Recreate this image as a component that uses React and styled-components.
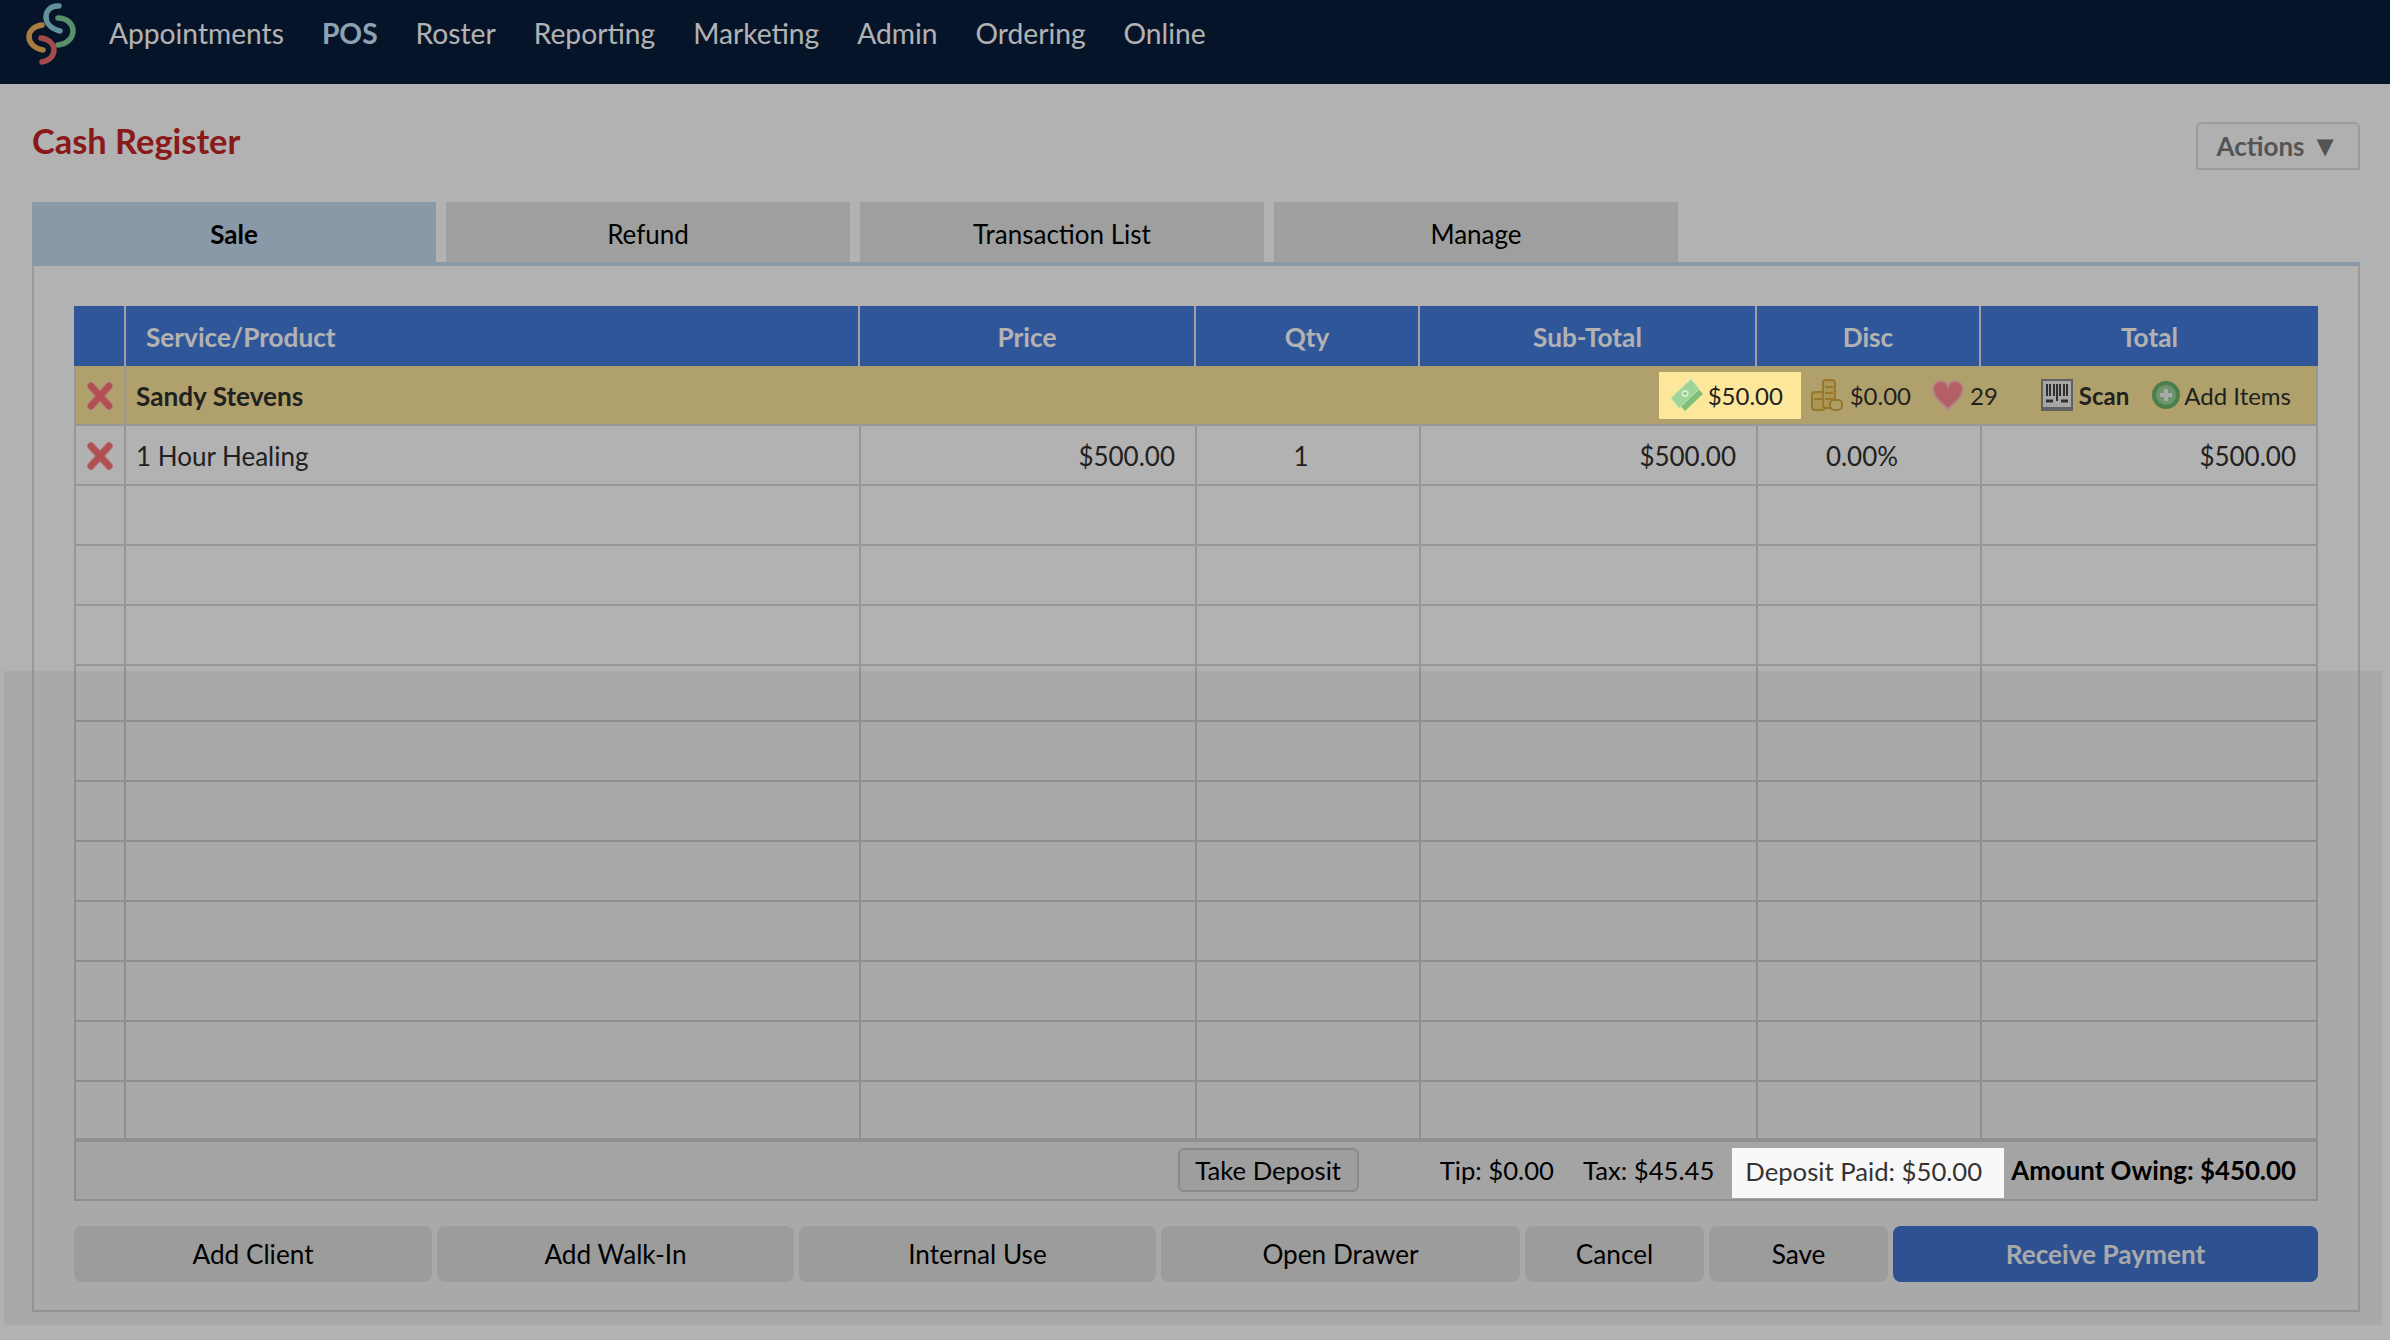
import React from 'react';
import styled, { createGlobalStyle } from 'styled-components';

const GlobalStyle = createGlobalStyle`
    html, body {
        margin: 0;
        background: #fff;
    }
    body {
        font-family: Lato, 'Liberation Sans', sans-serif;
        font-size: 26px;
        color: #303030;
    }
    * {
        box-sizing: border-box;
    }
`;

const Page = styled.div`
    width: 2390px;
    height: 1340px;
    overflow: hidden;
`;

// modal backdrop, everything except the highlighted boxes sits under it
const Dimmer = styled.div`
    position: fixed;
    inset: 0;
    background: rgba(0, 0, 0, 0.3);
    z-index: 10;
`;
const DimBand = styled.div`
    position: fixed;
    left: 4px;
    top: 671px;
    width: 2378px;
    height: 654px;
    background: rgba(0, 0, 0, 0.05);
    z-index: 11;
`;

const NavBar = styled.nav`
    height: 84px;
    background: #091d3c;
    display: flex;
    align-items: flex-start;
    padding: 2px 0 0 26px;
`;
const NavLinks = styled.ul`
    display: flex;
    gap: 38px;
    list-style: none;
    margin: 0;
    padding: 14px 0 0 15px;
`;
const NavLink = styled.li`
    color: ${(p) => (p.$active ? '#cce9ff' : '#fff')};
    font-size: 28.2px;
    font-weight: ${(p) => (p.$active ? 700 : 400)};
    line-height: 34px;
`;

const Content = styled.main`
    padding: 0 30px 0 32px;
`;
const TitleBar = styled.header`
    height: 118px;
    display: flex;
    justify-content: space-between;
    align-items: flex-start;
`;
const Title = styled.h1`
    margin: 36px 0 0;
    font-size: 34.4px;
    line-height: 42px;
    font-weight: 700;
    color: #c62525;
`;
const ActionsButton = styled.button`
    margin-top: 38px;
    width: 164px;
    height: 48px;
    font: 700 26px Lato, sans-serif;
    color: #797979;
    background: #fdfdfd;
    border: 2px solid #e0e0e0;
    border-radius: 6px 6px 0 0;
    padding: 0;
`;
const Caret = styled.span`
    font-size: 29px;
    line-height: 20px;
`;

const Tabs = styled.div`
    display: flex;
    gap: 10px;
`;
const Tab = styled.div`
    width: 404px;
    height: ${(p) => (p.$active ? 64 : 60)}px;
    margin-bottom: ${(p) => (p.$active ? -4 : 0)}px;
    position: relative;
    background: ${(p) => (p.$active ? '#c5dcf0' : '#e4e4e4')};
    color: #000;
    font-size: 26px;
    font-weight: ${(p) => (p.$active ? 700 : 400)};
    display: flex;
    justify-content: center;
    padding-top: 16px;
    line-height: 32px;
`;
const Panel = styled.section`
    height: 1050px;
    border: 2px solid #dcdcdc;
    border-top: 4px solid #c5dcf0;
    padding: 40px 40px 0;
`;

const COLUMNS = '50px 735px 336px 224px 337px 224px 334px';

const Table = styled.div`
    width: 2244px;
`;
const HeadRow = styled.div`
    display: grid;
    grid-template-columns: 52px 734px 336px 224px 337px 224px 337px;
    height: 60px;
    background: #467bdd;
`;
const HeadCell = styled.div`
    color: #fff;
    font-weight: 700;
    font-size: 26.2px;
    line-height: 62px;
    text-align: ${(p) => p.$align || 'center'};
    padding-left: ${(p) => (p.$align === 'left' ? 20 : 0)}px;
    border-right: ${(p) => (p.$last ? 0 : '2px solid #e6e6e6')};
`;
const TableBody = styled.div`
    border-left: 2px solid #d8d8d8;
    border-right: 2px solid #d8d8d8;
`;
const Row = styled.div`
    display: grid;
    grid-template-columns: ${COLUMNS};
    height: ${(p) => p.$height || 60}px;
    border-bottom: ${(p) => (p.$heavy ? 4 : 2)}px solid #d8d8d8;
`;
const Cell = styled.div`
    display: flex;
    align-items: center;
    justify-content: ${(p) => p.$justify || 'flex-start'};
    padding: 2px ${(p) => p.$right || 0}px 0 ${(p) => p.$left || 0}px;
    border-right: ${(p) => (p.$last ? 0 : '2px solid #d8d8d8')};
`;
const ClientRow = styled.div`
    display: grid;
    grid-template-columns: 50px 1fr;
    height: 60px;
    background: #fde79b;
    border-bottom: 2px solid #d8d8d8;
`;
const ClientCell = styled.div`
    display: flex;
    align-items: center;
    justify-content: space-between;
    padding: 0 25px 0 10px;
`;
const ClientName = styled.strong`
    font-size: 26.2px;
    padding-top: 2px;
`;
const ClientInfo = styled.div`
    display: flex;
    align-items: center;
    font-size: 24px;
`;
const InfoItem = styled.span`
    display: inline-flex;
    align-items: center;
    gap: ${(p) => p.$gap || 7}px;
    margin-left: ${(p) => p.$left || 0}px;
    font-weight: ${(p) => (p.$bold ? 700 : 400)};
`;
// these two sit above the backdrop
const Highlight = styled.span`
    position: relative;
    z-index: 20;
    display: inline-flex;
    align-items: center;
    gap: 5px;
    width: 142px;
    height: 47px;
    padding-left: 12px;
    background: #fde79b;
    color: #222;
`;

const Footer = styled.div`
    height: 59px;
    display: flex;
    justify-content: flex-end;
    align-items: stretch;
    padding: 0 20px 0 0;
    border: 2px solid #d8d8d8;
    border-top: 0;
    background: #f8f8f8;
    color: #000;
    font-size: 25.7px;
`;
const DepositButton = styled.button`
    align-self: flex-start;
    margin: 6px 81px 0 0;
    width: 181px;
    height: 44px;
    font: 400 25.7px Lato, sans-serif;
    color: #000;
    background: #eee;
    border: 2px solid #cfcfcf;
    border-radius: 6px;
    padding: 0;
`;
const FooterText = styled.span`
    line-height: 57px;
    margin-right: ${(p) => p.$right || 0}px;
    font-weight: ${(p) => (p.$bold ? 700 : 400)};
    font-size: ${(p) => (p.$bold ? '25.85px' : 'inherit')};
`;
const DepositPaid = styled.span`
    position: relative;
    z-index: 20;
    align-self: flex-start;
    margin: 6px 7px 0 0;
    width: 272px;
    height: 50px;
    padding-left: 13px;
    line-height: 47px;
    background: #f8f8f8;
    color: #333;
`;

const ButtonBar = styled.div`
    display: flex;
    gap: 5px;
    margin-top: 25px;
`;
const BarButton = styled.button`
    width: ${(p) => p.$width}px;
    height: 56px;
    border: 0;
    border-radius: 8px;
    padding: 0;
    font: ${(p) => (p.$primary ? 700 : 400)} 26.2px Lato, sans-serif;
    color: ${(p) => (p.$primary ? '#fff' : '#000')};
    background: ${(p) => (p.$primary ? '#467bdd' : '#ececec')};
`;

const Logo = () => (
    <svg width='68' height='68' viewBox='0 0 68 68' fill='none' strokeWidth='5.5' strokeLinecap='round'>
        <path d='M33 4C25 3 20 9 20 15C20 22 26 27 34 29' stroke='#8fd0dd' />
        <path d='M32 16C41 16 47 22 47 29C47 36 41 42 32 43' stroke='#7fcf98' />
        <path d='M16 23C8 24 3 29 3 35C3 41 9 47 17 48' stroke='#f2b45d' />
        <path d='M15 36C23 37 28 42 28 48C28 54 23 59 16 60' stroke='#ec6a6a' />
    </svg>
);

const RemoveIcon = () => (
    <svg width='28' height='30' viewBox='0 0 28 30' fill='none' strokeLinecap='round'>
        <path d='M5 5L23 25M23 5L5 25' stroke='#ffb0b0' strokeWidth='8' />
        <path d='M5 5L23 25M23 5L5 25' stroke='#ff7278' strokeWidth='6' />
    </svg>
);

const MoneyIcon = () => (
    <svg width='32' height='32' viewBox='0 0 32 32'>
        <path d='M6 23L24 6L32 15L14 32Z' fill='#7fbf7a' />
        <path d='M0 19L20 0L28 10L8 29Z' fill='#9ed49a' stroke='#bfe6b8' strokeWidth='1' />
        <circle cx='14' cy='14.5' r='3.5' fill='#d4efcd' />
        <circle cx='14' cy='14.5' r='1.5' fill='#7fbf7a' />
    </svg>
);

const CoinsIcon = () => (
    <svg width='32' height='32' viewBox='0 0 32 32'>
        <rect x='1' y='13' width='13' height='18' rx='3' fill='#f7d77c' stroke='#d9ab3e' strokeWidth='2' />
        <rect x='12' y='1' width='12' height='28' rx='3' fill='#f7d77c' stroke='#d9ab3e' strokeWidth='2' />
        <path d='M14 8H22M14 14H22M14 20H22M3 20H12' stroke='#d9ab3e' strokeWidth='2' />
        <rect x='19' y='21' width='12' height='10' rx='4' fill='#fbe194' stroke='#d9ab3e' strokeWidth='2' />
    </svg>
);

const HeartIcon = () => (
    <svg width='32' height='30' viewBox='0 0 32 30'>
        <path d='M16 29C9 23 1 17 1 9C1 4 5 1 9 1C12 1 15 3 16 6C17 3 20 1 23 1C27 1 31 4 31 9C31 17 23 23 16 29Z' fill='#ff8a8e' stroke='#ffc4c4' strokeWidth='2' />
    </svg>
);

const BarcodeIcon = () => (
    <svg width='32' height='32' viewBox='0 0 32 32'>
        <rect width='32' height='32' fill='#8c8c8c' />
        <rect x='2' y='2' width='28' height='26' fill='#eee' />
        <path d='M6 5V17M9 5V17M13 5V17M16 5V22M19 5V17M23 5V17M26 5V17' stroke='#444' strokeWidth='2' />
        <path d='M5 22H12M20 22H27' stroke='#444' strokeWidth='3' />
    </svg>
);

const AddIcon = () => (
    <svg width='28' height='28' viewBox='0 0 28 28'>
        <circle cx='14' cy='14' r='14' fill='#6cb56c' />
        <circle cx='14' cy='14' r='10' fill='#9bd69b' />
        <path d='M14 8V20M8 14H20' stroke='#f2f2f2' strokeWidth='4' />
    </svg>
);

const NAV_ITEMS = ['Appointments', 'POS', 'Roster', 'Reporting', 'Marketing', 'Admin', 'Ordering', 'Online'];
const TABS = ['Sale', 'Refund', 'Transaction List', 'Manage'];
const EMPTY_ROWS = [60, 60, 60, 56, 60, 60, 60, 60, 60, 60, 60];
const BUTTONS = [
    ['Add Client', 358],
    ['Add Walk-In', 357],
    ['Internal Use', 357],
    ['Open Drawer', 359],
    ['Cancel', 179],
    ['Save', 179],
];

const App = () => {
    return (
        <Page>
            <GlobalStyle />
            <NavBar>
                <Logo />
                <NavLinks>
                    {NAV_ITEMS.map((item) => (
                        <NavLink key={item} $active={item === 'POS'}>
                            {item}
                        </NavLink>
                    ))}
                </NavLinks>
            </NavBar>
            <Content>
                <TitleBar>
                    <Title>Cash Register</Title>
                    <ActionsButton>
                        Actions <Caret>▼</Caret>
                    </ActionsButton>
                </TitleBar>
                <Tabs>
                    {TABS.map((tab) => (
                        <Tab key={tab} $active={tab === 'Sale'}>
                            {tab}
                        </Tab>
                    ))}
                </Tabs>
                <Panel>
                    <Table>
                        <HeadRow>
                            <HeadCell />
                            <HeadCell $align='left'>Service/Product</HeadCell>
                            <HeadCell>Price</HeadCell>
                            <HeadCell>Qty</HeadCell>
                            <HeadCell>Sub-Total</HeadCell>
                            <HeadCell>Disc</HeadCell>
                            <HeadCell $last>Total</HeadCell>
                        </HeadRow>
                        <TableBody>
                            <ClientRow>
                                <Cell $justify='center'>
                                    <RemoveIcon />
                                </Cell>
                                <ClientCell>
                                    <ClientName>Sandy Stevens</ClientName>
                                    <ClientInfo>
                                        <Highlight>
                                            <MoneyIcon />
                                            $50.00
                                        </Highlight>
                                        <InfoItem $left={10}>
                                            <CoinsIcon />
                                            $0.00
                                        </InfoItem>
                                        <InfoItem $left={21} $gap={6}>
                                            <HeartIcon />
                                            29
                                        </InfoItem>
                                        <InfoItem $left={43} $gap={6} $bold>
                                            <BarcodeIcon />
                                            Scan
                                        </InfoItem>
                                        <InfoItem $left={23} $gap={4}>
                                            <AddIcon />
                                            Add Items
                                        </InfoItem>
                                    </ClientInfo>
                                </ClientCell>
                            </ClientRow>
                            <Row>
                                <Cell $justify='center'>
                                    <RemoveIcon />
                                </Cell>
                                <Cell $left={10}>1 Hour Healing</Cell>
                                <Cell $justify='flex-end' $right={20}>$500.00</Cell>
                                <Cell $justify='center' $right={14}>1</Cell>
                                <Cell $justify='flex-end' $right={20}>$500.00</Cell>
                                <Cell $justify='center' $right={14}>0.00%</Cell>
                                <Cell $justify='flex-end' $right={20} $last>$500.00</Cell>
                            </Row>
                            {EMPTY_ROWS.map((height, i) => (
                                <Row key={i} $height={height} $heavy={i === EMPTY_ROWS.length - 1}>
                                    <Cell />
                                    <Cell />
                                    <Cell />
                                    <Cell />
                                    <Cell />
                                    <Cell />
                                    <Cell $last />
                                </Row>
                            ))}
                        </TableBody>
                        <Footer>
                            <DepositButton>Take Deposit</DepositButton>
                            <FooterText $right={29}>Tip: $0.00</FooterText>
                            <FooterText $right={18}>Tax: $45.45</FooterText>
                            <DepositPaid>Deposit Paid: $50.00</DepositPaid>
                            <FooterText $bold>Amount Owing: $450.00</FooterText>
                        </Footer>
                        <ButtonBar>
                            {BUTTONS.map(([label, width]) => (
                                <BarButton key={label} $width={width}>
                                    {label}
                                </BarButton>
                            ))}
                            <BarButton $width={425} $primary>
                                Receive Payment
                            </BarButton>
                        </ButtonBar>
                    </Table>
                </Panel>
            </Content>
            <Dimmer />
            <DimBand />
        </Page>
    );
};

export default App;
